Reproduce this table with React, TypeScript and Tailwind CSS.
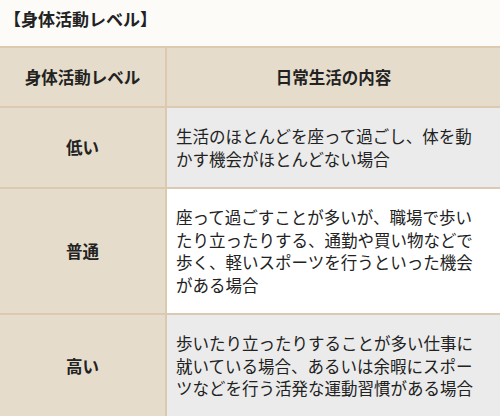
import React from "react";

const rows = [
  {
    level: "低い",
    text: "生活のほとんどを座って過ごし、体を動かす機会がほとんどない場合",
    gray: true,
  },
  {
    level: "普通",
    text: "座って過ごすことが多いが、職場で歩いたり立ったりする、通勤や買い物などで歩く、軽いスポーツを行うといった機会がある場合",
    gray: false,
  },
  {
    level: "高い",
    text: "歩いたり立ったりすることが多い仕事に就いている場合、あるいは余暇にスポーツなどを行う活発な運動習慣がある場合",
    gray: true,
  },
];

export default function App() {
  return (
    <div
      className="w-[500px] h-[416px] overflow-hidden bg-[#fcfbf8] text-[#222]"
      style={{ fontFamily: '"Noto Sans CJK JP", "Noto Sans", sans-serif' }}
    >
      <h2 className="h-[46px] pl-[4px] pt-[7px] text-[17px] font-bold leading-[24px]">
        【身体活動レベル】
      </h2>
      <table className="w-[500px] border-collapse table-fixed text-[16.5px] leading-[22.5px]">
        <colgroup>
          <col className="w-[166px]" />
          <col />
        </colgroup>
        <thead>
          <tr className="bg-[#e6dccb]">
            <th className="border-2 border-l-0 border-[#dccab0] h-[60px] font-bold text-center">
              身体活動レベル
            </th>
            <th className="border-2 border-r-0 border-[#dccab0] font-bold text-center">
              日常生活の内容
            </th>
          </tr>
        </thead>
        <tbody>
          {rows.map((r) => (
            <tr key={r.level}>
              <td className="border-2 border-l-0 border-[#dccab0] bg-[#e6dccb] text-center font-bold">
                {r.level}
              </td>
              <td
                className={`border-2 border-r-0 border-[#dccab0] py-[17px] pl-[9px] pr-[24px] ${
                  r.gray ? "bg-[#ebebeb]" : "bg-white"
                }`}
              >
                {r.text}
              </td>
            </tr>
          ))}
        </tbody>
      </table>
    </div>
  );
}
